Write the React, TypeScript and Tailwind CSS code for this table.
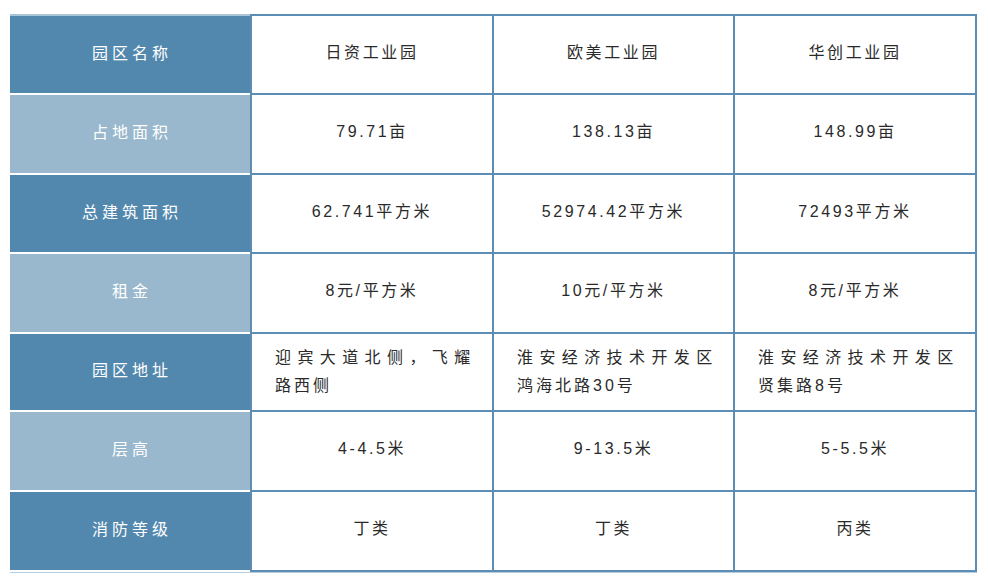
const rows: { label: string; dark: boolean; h: string; cells: string[][] }[] = [
  { label: '园区名称', dark: true, h: 'h-[79px]', cells: [['日资工业园'], ['欧美工业园'], ['华创工业园']] },
  { label: '占地面积', dark: false, h: 'h-[80px]', cells: [['79.71亩'], ['138.13亩'], ['148.99亩']] },
  { label: '总建筑面积', dark: true, h: 'h-[79px]', cells: [['62.741平方米'], ['52974.42平方米'], ['72493平方米']] },
  { label: '租金', dark: false, h: 'h-[80px]', cells: [['8元/平方米'], ['10元/平方米'], ['8元/平方米']] },
  {
    label: '园区地址',
    dark: true,
    h: 'h-[78px]',
    cells: [
      ['迎宾大道北侧，飞耀', '路西侧'],
      ['淮安经济技术开发区', '鸿海北路30号'],
      ['淮安经济技术开发区', '贤集路8号'],
    ],
  },
  { label: '层高', dark: false, h: 'h-[80px]', cells: [['4-4.5米'], ['9-13.5米'], ['5-5.5米']] },
  { label: '消防等级', dark: true, h: 'h-[80px]', cells: [['丁类'], ['丁类'], ['丙类']] },
];

const widths = ['w-[242px]', 'w-[241px]', 'w-[244px] border-r-2'];

function Cell({ lines, w }: { lines: string[]; w: string }) {
  if (lines.length > 1) {
    return (
      <div className={`${w} flex flex-col justify-center border-b-2 border-l-2 border-[#5b8db5] pl-[23px] text-[16px] leading-[28px] text-[#2a2a2a]`}>
        <span className="whitespace-nowrap tracking-[6.4px]">{lines[0]}</span>
        <span className="whitespace-nowrap tracking-[3px]">{lines[1]}</span>
      </div>
    );
  }
  return (
    <div className={`${w} flex items-center justify-center border-b-2 border-l-2 border-[#5b8db5] pb-[4px] text-[16px] tracking-[2.6px] text-[#2a2a2a]`}>
      {lines[0]}
    </div>
  );
}

export default function App() {
  return (
    <div
      className="h-[582px] w-[988px] bg-white pt-[14px] pl-[10px]"
      style={{ fontFamily: '"Liberation Sans", "Noto Sans CJK SC", sans-serif' }}
    >
      <div className="flex w-[967px] flex-col">
        <div className="flex h-[2px]">
          <div className="w-[240px] bg-[#aac4d8]" />
          <div className="flex-1 bg-[#5b8db5]" />
        </div>
        {rows.map((row) => (
          <div key={row.label} className={`flex ${row.h}`}>
            <div
              className={`flex w-[240px] items-center justify-center border-b-2 border-white pb-[2px] pl-[4px] text-[16px] tracking-[4px] text-white ${
                row.dark ? 'bg-[#5388ae]' : 'bg-[#99b8cd]'
              }`}
            >
              {row.label}
            </div>
            {row.cells.map((c, i) => (
              <Cell key={i} lines={c} w={widths[i]} />
            ))}
          </div>
        ))}
        <div className="h-[1px] bg-[#b5cde0]" />
      </div>
    </div>
  );
}
